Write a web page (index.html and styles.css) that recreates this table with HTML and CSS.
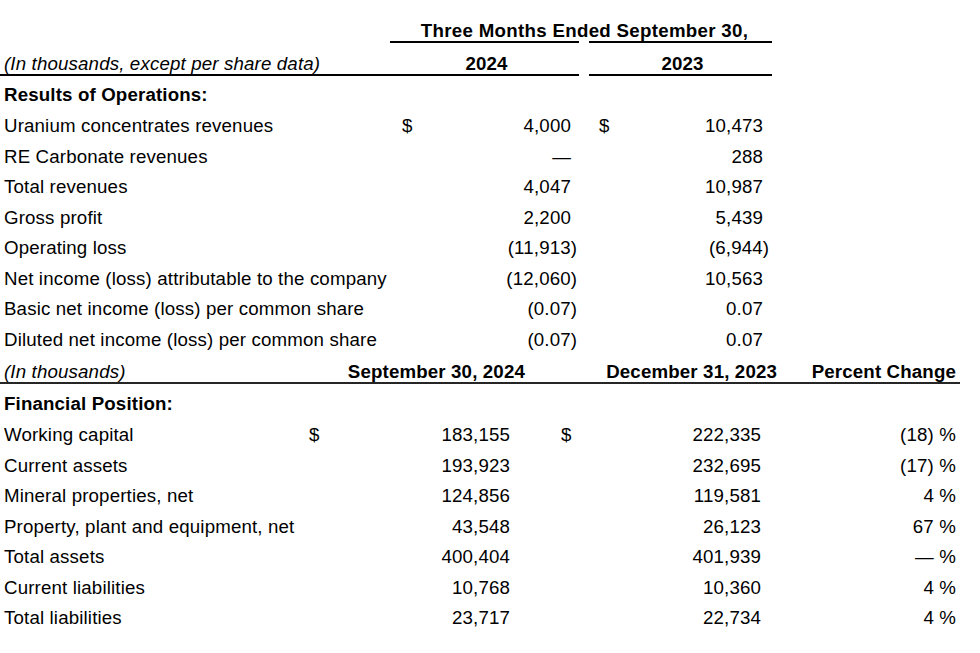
FILE: index.html
```html
<!DOCTYPE html>
<html lang="en">
<head>
<meta charset="utf-8">
<title>Results of Operations and Financial Position</title>
<link rel="stylesheet" href="styles.css">
</head>
<body>
<table class="ops">
  <colgroup>
    <col class="c-lbl"><col class="c-cur"><col class="c-val"><col class="c-gap"><col class="c-cur2"><col class="c-val2">
  </colgroup>
  <tr class="r-period">
    <td></td>
    <td colspan="5" class="period">Three Months Ended September 30,</td>
  </tr>
  <tr class="r-years">
    <td class="lbl note ruled">(In thousands, except per share data)</td>
    <td colspan="2" class="year ruled">2024</td>
    <td></td>
    <td colspan="2" class="year ruled">2023</td>
  </tr>
  <tr class="r-sect">
    <td class="lbl head" colspan="6">Results of Operations:</td>
  </tr>
  <tr>
    <td class="lbl">Uranium concentrates revenues</td>
    <td class="cur">$</td><td class="num">4,000</td><td></td>
    <td class="cur cur-b">$</td><td class="num num-b">10,473</td>
  </tr>
  <tr>
    <td class="lbl">RE Carbonate revenues</td>
    <td></td><td class="num">—</td><td></td>
    <td></td><td class="num num-b">288</td>
  </tr>
  <tr>
    <td class="lbl">Total revenues</td>
    <td></td><td class="num">4,047</td><td></td>
    <td></td><td class="num num-b">10,987</td>
  </tr>
  <tr>
    <td class="lbl">Gross profit</td>
    <td></td><td class="num">2,200</td><td></td>
    <td></td><td class="num num-b">5,439</td>
  </tr>
  <tr>
    <td class="lbl">Operating loss</td>
    <td></td><td class="num">(11,913<span class="rp">)</span></td><td></td>
    <td></td><td class="num num-b">(6,944<span class="rp">)</span></td>
  </tr>
  <tr>
    <td class="lbl">Net income (loss) attributable to the company</td>
    <td></td><td class="num">(12,060<span class="rp">)</span></td><td></td>
    <td></td><td class="num num-b">10,563</td>
  </tr>
  <tr>
    <td class="lbl">Basic net income (loss) per common share</td>
    <td></td><td class="num">(0.07<span class="rp">)</span></td><td></td>
    <td></td><td class="num num-b">0.07</td>
  </tr>
  <tr>
    <td class="lbl">Diluted net income (loss) per common share</td>
    <td></td><td class="num">(0.07<span class="rp">)</span></td><td></td>
    <td></td><td class="num num-b">0.07</td>
  </tr>
</table>

<table class="pos">
  <colgroup>
    <col class="p-lbl"><col class="p-cur"><col class="p-val"><col class="p-cur2"><col class="p-val2"><col class="p-pct">
  </colgroup>
  <tr class="r-dates">
    <td class="lbl note ruled">(In thousands)</td>
    <td colspan="2" class="date ruled">September 30, 2024</td>
    <td colspan="2" class="date ruled">December 31, 2023</td>
    <td class="date pct-h ruled">Percent Change</td>
  </tr>
  <tr class="r-sect2">
    <td class="lbl head" colspan="6">Financial Position:</td>
  </tr>
  <tr>
    <td class="lbl">Working capital</td>
    <td class="pcur">$</td><td class="pnum">183,155</td>
    <td class="pcur pcur-b">$</td><td class="pnum pnum-b">222,335</td>
    <td class="pct">(18) %</td>
  </tr>
  <tr>
    <td class="lbl">Current assets</td>
    <td></td><td class="pnum">193,923</td>
    <td></td><td class="pnum pnum-b">232,695</td>
    <td class="pct">(17) %</td>
  </tr>
  <tr>
    <td class="lbl">Mineral properties, net</td>
    <td></td><td class="pnum">124,856</td>
    <td></td><td class="pnum pnum-b">119,581</td>
    <td class="pct">4 %</td>
  </tr>
  <tr>
    <td class="lbl">Property, plant and equipment, net</td>
    <td></td><td class="pnum">43,548</td>
    <td></td><td class="pnum pnum-b">26,123</td>
    <td class="pct">67 %</td>
  </tr>
  <tr>
    <td class="lbl">Total assets</td>
    <td></td><td class="pnum">400,404</td>
    <td></td><td class="pnum pnum-b">401,939</td>
    <td class="pct">— %</td>
  </tr>
  <tr>
    <td class="lbl">Current liabilities</td>
    <td></td><td class="pnum">10,768</td>
    <td></td><td class="pnum pnum-b">10,360</td>
    <td class="pct">4 %</td>
  </tr>
  <tr>
    <td class="lbl">Total liabilities</td>
    <td></td><td class="pnum">23,717</td>
    <td></td><td class="pnum pnum-b">22,734</td>
    <td class="pct">4 %</td>
  </tr>
</table>
</body>
</html>
```

FILE: styles.css
```css
html, body {
  margin: 0;
  padding: 0;
  background: #ffffff;
}

body {
  font-family: "Liberation Sans", Arial, sans-serif;
  font-size: 18.7px;
  letter-spacing: 0.15px;
  color: #000000;
}

table {
  border-collapse: separate;
  border-spacing: 0;
  table-layout: fixed;
}

td {
  padding: 3px 0 0 0;
  line-height: 27.57px;
  white-space: nowrap;
  vertical-align: top;
}

/* ---------- Results of operations ---------- */
.ops { width: 772px; }
.c-lbl  { width: 390px; }
.c-cur  { width: 30px; }
.c-val  { width: 159px; }
.c-gap  { width: 10px; }
.c-cur2 { width: 31px; }
.c-val2 { width: 152px; }

.lbl { padding-left: 4px; }
.note { font-style: italic; }
.head { font-weight: bold; }

.ops .r-period td {
  padding-top: 20px;
  padding-bottom: 2px;
  line-height: 21px;
}

.ops .r-period .period {
  padding-left: 7px;
  font-weight: bold;
  text-align: center;
  letter-spacing: 0.3px;
  background-image: linear-gradient(to right, #000 189px, transparent 189px, transparent 199px, #000 199px);
  background-size: 100% 2px;
  background-position: left bottom;
  background-repeat: no-repeat;
}

.ops .r-years td {
  padding-top: 10px;
  line-height: 21px;
}

.ruled { border-bottom: 2px solid #000; }

.ops .r-years .year {
  padding-left: 4px;
  font-weight: bold;
  text-align: center;
}

.ops .r-sect td {
  padding-top: 3.9px;
  line-height: 29.1px;
}

.cur { padding-left: 12px; }
.cur-b { padding-left: 10px; }

.num {
  text-align: right;
  padding-right: 8px;
}
.num-b { padding-right: 9px; }

.rp { margin-right: -0.33em; }

/* ---------- Financial position ---------- */
.pos { width: 960px; }
.pos td { line-height: 27.5px; }
.p-lbl  { width: 297px; }
.p-cur  { width: 43px; }
.p-val  { width: 187px; }
.p-cur2 { width: 63px; }
.p-val2 { width: 189px; }
.p-pct  { width: 181px; }

.pos .r-dates td {
  padding-top: 7.5px;
  line-height: 21px;
}
.pos .r-dates .ruled { border-bottom-color: #262626; }

.date {
  font-weight: bold;
  text-align: right;
  padding-right: 2px;
}
.pct-h { padding-right: 4px; }

.pos .r-sect2 td {
  padding-top: 5.5px;
  line-height: 29px;
}

.pcur { padding-left: 12px; }
.pcur-b { padding-left: 34px; }

.pnum {
  text-align: right;
  padding-right: 17px;
}
.pnum-b { padding-right: 18px; }

.pct {
  text-align: right;
  padding-right: 4px;
}
```
